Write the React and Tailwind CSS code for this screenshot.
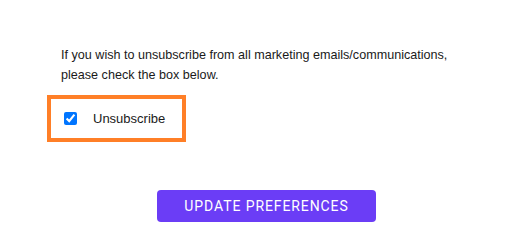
import React from 'react';

// Marketing email preferences: opt-out checkbox + submit
const App = () => {
  return (
    <div className="w-[530px] h-[252px] bg-white pt-[45px]" style={{ fontFamily: '"Liberation Sans", Arial, sans-serif' }}>
      <p className="ml-[61px] text-[12.6px] leading-[20px] text-[#1a1a1a]">
        If you wish to unsubscribe from all marketing emails/communications,
        <br />
        please check the box below.
      </p>

      {/* Highlighted opt-out row */}
      <div className="ml-[47px] mt-[10px] flex w-[139px] h-[47px] items-center border-4 border-[#ff7f27] pl-[13px]">
        <input type="checkbox" defaultChecked className="w-[13px] h-[13px]" />
        <span className="ml-[16px] text-[13px] text-[#1a1a1a]">Unsubscribe</span>
      </div>

      <div className="mt-[48px] flex justify-center pl-[3px]">
        <button
          type="button"
          className="w-[219px] h-[32px] rounded bg-[#6b3df6] text-white text-[14px] font-normal tracking-[0.9px] uppercase"
          style={{ fontFamily: 'Roboto, sans-serif' }}
        >
          Update Preferences
        </button>
      </div>
    </div>
  );
};

export default App;
